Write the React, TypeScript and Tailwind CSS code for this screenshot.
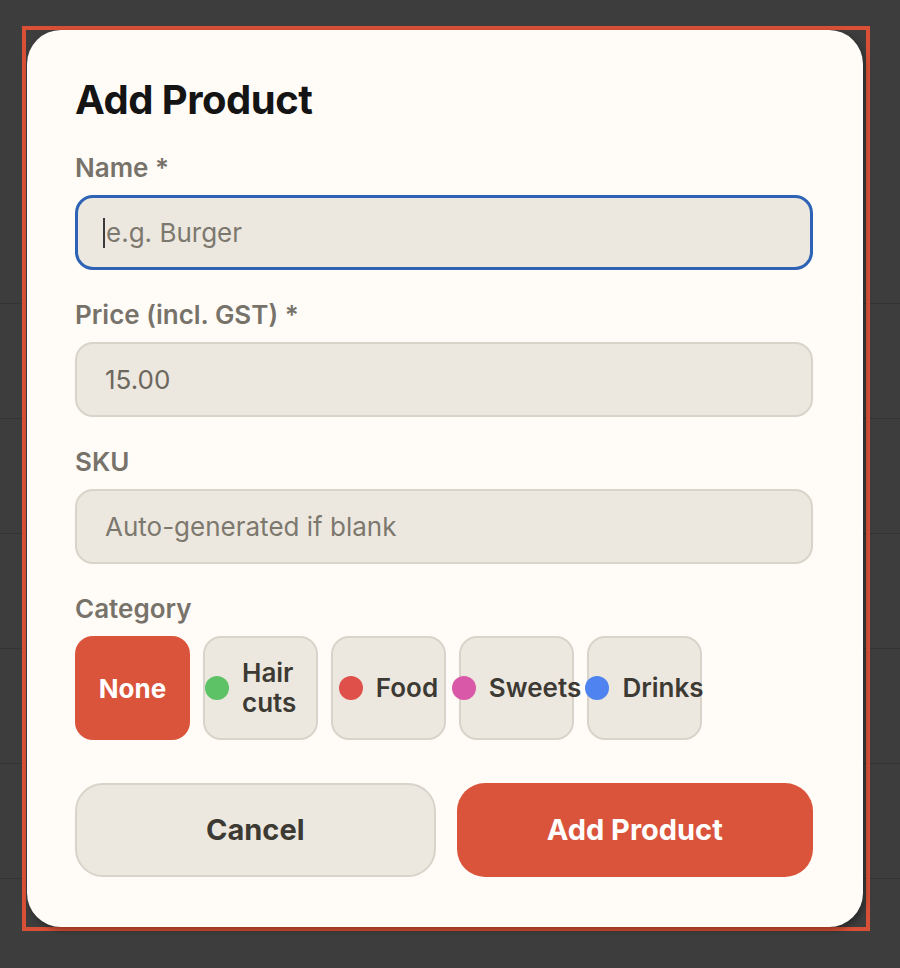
import React from 'react';

const categories = [
  { name: 'Hair cuts', color: 'bg-[#5cc265]' },
  { name: 'Food', color: 'bg-[#e0504a]' },
  { name: 'Sweets', color: 'bg-[#da58a8]' },
  { name: 'Drinks', color: 'bg-[#4f83ef]' },
];

function Field({
  label,
  placeholder,
  value,
  focused,
}: {
  label: string;
  placeholder?: string;
  value?: string;
  focused?: boolean;
}) {
  return (
    <div>
      <div className="mb-[11px] h-8 text-[26px] leading-8 font-semibold text-[#78736a]">{label}</div>
      <div
        className={`flex h-[75px] items-center rounded-[18px] bg-[#ece8e0] text-[26px] ${
          focused ? 'border-[3px] border-[#2d62b4] px-[25px]' : 'border-2 border-[#d9d4ca] px-[28px]'
        }`}
      >
        {focused && <span className="mr-[1px] h-[30px] w-[2px] bg-[#3a3a3a]" />}
        {value ? (
          <span className="text-[#6c675d]">{value}</span>
        ) : (
          <span className="text-[#7d786e]">{placeholder}</span>
        )}
      </div>
    </div>
  );
}

export default function App() {
  return (
    <div
      className="relative h-[968px] w-[900px] overflow-hidden bg-[#3d3d3d]"
      style={{ fontFamily: 'Inter, "Noto Sans", sans-serif' }}
    >
      {/* backdrop table rows */}
      <div className="pt-[303px]">
        {[0, 1, 2, 3, 4, 5].map(i => (
          <div key={i} className="h-[115px] border-t border-[#343434]" />
        ))}
      </div>

      {/* modal */}
      <div className="absolute left-[22px] top-[26px] w-[848px] border-4 border-[#da5036]">
        <div className="ml-[1px] w-[836px] rounded-[34px] bg-[#fffcf8] pl-[48px] pr-[50px] pt-[46px] pb-[50px] shadow-[2px_3px_6px_rgba(0,0,0,0.35)]">
          <h1 className="mb-[28px] h-12 text-[40px] leading-[48px] font-bold tracking-[-0.5px] text-[#141414]">
            Add Product
          </h1>

          <div className="flex flex-col gap-[29px]">
            <Field label="Name *" placeholder="e.g. Burger" focused />
            <Field label="Price (incl. GST) *" value="15.00" />
            <Field label="SKU" placeholder="Auto-generated if blank" />

            <div>
              <div className="mb-[11px] h-8 text-[26px] leading-8 font-semibold text-[#78736a]">Category</div>
              <div className="flex gap-[13px]">
                <button className="flex h-[104px] w-[115px] items-center justify-center rounded-[18px] bg-[#d9543a] text-[26px] font-bold text-white">
                  None
                </button>
                {categories.map(c => (
                  <button
                    key={c.name}
                    className="flex h-[104px] w-[115px] items-center justify-center gap-[13px] rounded-[18px] border-2 border-[#d9d4ca] bg-[#ece8e0] text-[26px] leading-[30px] font-semibold text-[#3d3a34]"
                  >
                    <span className={`h-6 w-6 shrink-0 rounded-full ${c.color}`} />
                    <span className="text-left">{c.name}</span>
                  </button>
                ))}
              </div>
            </div>
          </div>

          <div className="mt-[43px] flex gap-[21px]">
            <button className="h-[94px] flex-1 rounded-[28px] border-2 border-[#d9d4ca] bg-[#ece8e0] text-[29px] font-bold text-[#3d3a34]">
              Cancel
            </button>
            <button className="h-[94px] flex-1 rounded-[28px] bg-[#d9543a] text-[29px] font-bold text-white">
              Add Product
            </button>
          </div>
        </div>
      </div>
    </div>
  );
}
